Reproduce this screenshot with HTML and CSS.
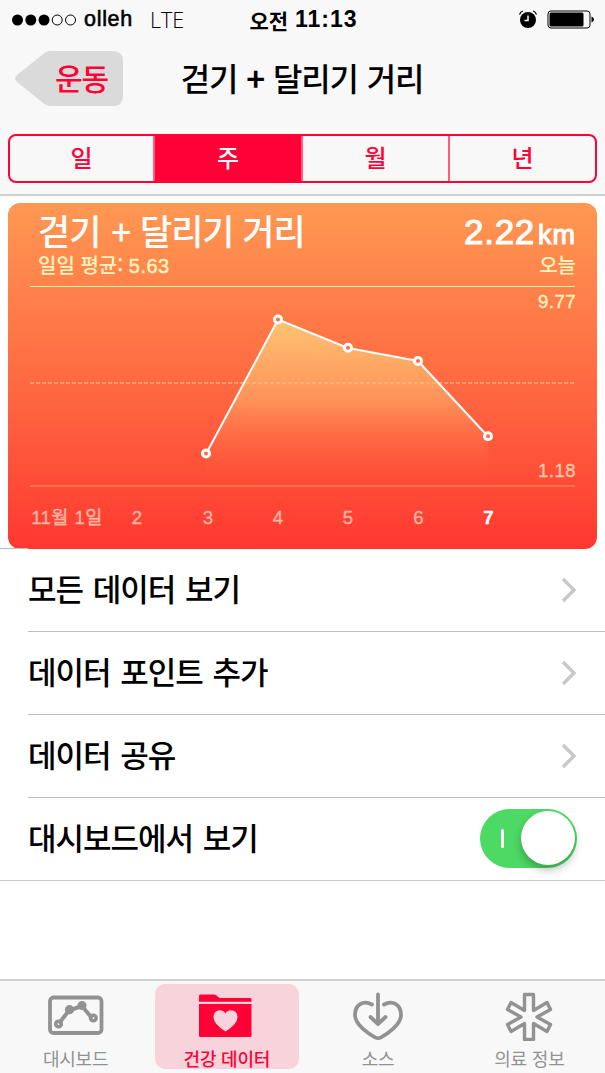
FILE: index.html
```
<!DOCTYPE html>
<html lang="ko">
<head>
  <meta charset="utf-8" />
  <meta name="viewport" content="width=device-width, initial-scale=1.0" />
  <title>걷기 + 달리기 거리</title>
  <link rel="stylesheet" href="styles.css">
</head>
<body>
  <header>
    <div class="status-bar">
      <div class="status-left">
        <svg class="signal" width="66" height="12" viewBox="0 0 66 12">
          <circle cx="5.500" cy="6" r="5.500" />
          <circle cx="18.800" cy="6" r="5.500" />
          <circle cx="32" cy="6" r="5.500" />
          <circle class="empty" cx="45.200" cy="6" r="5" />
          <circle class="empty" cx="58.500" cy="6" r="5" />
        </svg>
        <span class="carrier">olleh</span>
        <span class="network">LTE</span>
      </div>
      <div class="clock"><span class="ampm">오전</span><span>11:13</span></div>
      <div class="status-right">
        <svg width="20" height="20" viewBox="0 0 20 20">
          <circle cx="10" cy="10" r="8" />
          <path d="M10 5.500V10.500H6.500" fill="none" stroke="#fff" stroke-width="1.500" />
          <path d="M1.500 4.500Q2.500 1.500 5 1M18.500 4.500Q17.500 1.500 15 1" fill="none" stroke="#000" stroke-width="1.200" />
        </svg>
        <svg width="48" height="20" viewBox="0 0 48 20">
          <rect x="1" y="1" width="42" height="17" rx="3" fill="none" stroke="#000" />
          <rect x="2.500" y="2.500" width="34" height="14" rx="1.500" />
          <path d="M44.500 6.500Q47 7.500 47 9.500Q47 11.500 44.500 12.500Z" />
        </svg>
      </div>
    </div>

    <nav class="nav-bar">
      <a class="back" href="#">
        <svg class="back-shape" width="108" height="55" viewBox="0 0 108 55">
          <path d="M36 0H98Q108 0 108 10V45Q108 55 98 55H36Q31 55 27 51L2 31Q-2 27.500 2 24L27 4Q31 0 36 0Z" />
        </svg>
        <span>운동</span>
      </a>
      <h1>걷기 <b>+</b> 달리기 거리</h1>
    </nav>

    <div class="segments">
      <button>일</button>
      <button class="selected">주</button>
      <button>월</button>
      <button>년</button>
    </div>
  </header>

  <main>
    <section class="card">
      <div class="card-top">
        <h2>걷기 <span class="plus">+</span> 달리기 거리</h2>
        <div class="value">2.22<span class="unit">km</span></div>
      </div>
      <div class="card-sub">
        <span>일일 평균: <span class="average">5.63</span></span>
        <span>오늘</span>
      </div>
      <svg class="chart" width="589" height="262" viewBox="8 286 589 262">
        <defs>
          <linearGradient id="area" x1="0" y1="0" x2="0" y2="1">
            <stop offset="0" stop-color="#ffd27c" stop-opacity="0.85" />
            <stop offset="0.5" stop-color="#ffb66c" stop-opacity="0.55" />
            <stop offset="1" stop-color="#ff6040" stop-opacity="0" />
          </linearGradient>
        </defs>
        <path class="line-top" d="M30 286.500H575" />
        <path fill="url(#area)" d="M206 454L278 319L348 348L418 361L488 437V482H206Z" />
        <path class="line-average" d="M30 383H574" />
        <path class="line-bottom" d="M30 486H575" />
        <path class="line-data" d="M206 454L278 319.500L348 348L418 361L488 436.500" />
        <g class="points">
          <circle cx="206" cy="453.500" r="3.500" />
          <circle cx="278" cy="319.500" r="3.500" />
          <circle cx="348" cy="347.800" r="3.500" />
          <circle cx="418" cy="361" r="3.500" />
          <circle cx="488" cy="436.300" r="3.500" />
        </g>
        <text class="scale" x="576" y="308">9.77</text>
        <text class="scale low" x="576" y="477">1.18</text>
        <g class="days">
          <text class="first-day" x="67" y="524">11월 1일</text>
          <text x="137" y="524">2</text>
          <text x="208" y="524">3</text>
          <text x="278" y="524">4</text>
          <text x="348" y="524">5</text>
          <text x="418.500" y="524">6</text>
          <text class="today" x="488.500" y="524">7</text>
        </g>
      </svg>
    </section>

    <ul class="menu">
      <li>
        <span>모든 데이터 보기</span>
        <svg class="chevron" width="16" height="26" viewBox="0 0 16 26"><path d="M2 2L13 13L2 24" /></svg>
      </li>
      <li>
        <span>데이터 포인트 추가</span>
        <svg class="chevron" width="16" height="26" viewBox="0 0 16 26"><path d="M2 2L13 13L2 24" /></svg>
      </li>
      <li>
        <span>데이터 공유</span>
        <svg class="chevron" width="16" height="26" viewBox="0 0 16 26"><path d="M2 2L13 13L2 24" /></svg>
      </li>
      <li>
        <span>대시보드에서 보기</span>
        <div class="toggle">
          <div class="toggle-mark"></div>
          <div class="toggle-knob"></div>
        </div>
      </li>
    </ul>
  </main>

  <footer>
    <a class="tab" href="#">
      <svg width="56" height="50" viewBox="0 0 56 50">
        <rect x="2" y="6.500" width="51.500" height="35.500" rx="3.500" stroke-width="3.800" />
        <path d="M12 31L21 19.500L34 15L43 26" stroke-width="4" />
        <circle cx="10.500" cy="33" r="2.800" stroke-width="3.600" />
        <circle cx="21.500" cy="18.700" r="2.800" stroke-width="3.600" />
        <circle cx="34" cy="14.500" r="2.800" stroke-width="3.600" />
        <circle cx="45.300" cy="27" r="2.800" stroke-width="3.600" />
      </svg>
      <span>대시보드</span>
    </a>
    <a class="tab active" href="#">
      <svg width="56" height="50" viewBox="0 0 56 50">
        <path class="solid" d="M0 10.800V5Q0 3.500 1.500 3.500H15Q16.500 3.500 17.500 4.500L20.500 7H51Q52.500 7 52.500 8V10.800Z" />
        <path class="solid" d="M0 13H52.500V44.500Q52.500 46 51 46H1.500Q0 46 0 44.500Z" />
        <path class="heart" d="M26.500 40.500Q14.500 33 14.500 26C14.500 18.500 23.500 17 26.500 22.500C29.500 17 38.500 18.500 38.500 26Q38.500 33 26.500 40.500Z" />
      </svg>
      <span>건강 데이터</span>
    </a>
    <a class="tab" href="#">
      <svg width="54" height="50" viewBox="0 0 54 50">
        <path d="M21 13.500C12 8.500 4 14 4 24C4 34 18 43 24 46.300Q27 48 30 46.300C36 43 50 34 50 24C50 14 42 8.500 33 13.500" stroke-width="3.800" />
        <path d="M27 3.500V32M19.500 26L27 33L34.500 26" stroke-width="3.800" />
      </svg>
      <span>소스</span>
    </a>
    <a class="tab" href="#">
      <svg width="54" height="50" viewBox="0 0 54 50">
        <path d="M22.500 3.500H31.500V19.500L45 11.500L48.500 18.500L35 26L48.500 33.500L45 40.500L31.500 32.500V48.500H22.500V32.500L9 40.500L5.500 33.500L19 26L5.500 18.500L9 11.500L22.500 19.500Z" stroke-width="3.400" />
      </svg>
      <span>의료 정보</span>
    </a>
  </footer>
</body>
</html>
```

FILE: styles.css
```
html, body {
  height: 100%;
  margin: 0;
}

body {
  display: flex;
  flex-direction: column;
  font-family: "Liberation Sans", "Noto Sans CJK KR", sans-serif;
  font-weight: 500;
  color: #000;
  background: #fff;
}

a {
  color: inherit;
  text-decoration: none;
}

header {
  height: 194px;
  background: #f8f8f8;
  border-bottom: 2px solid #d0cfd0;
  flex-shrink: 0;
}

.status-bar {
  height: 39px;
  display: grid;
  grid-template-columns: 1fr auto 1fr;
  align-items: center;
  padding: 0 10px 0 12px;
}

.status-left {
  display: flex;
  align-items: center;
}

.signal .empty {
  fill: none;
  stroke: #000;
}

.carrier {
  margin-left: 6px;
  font: 21.5px "Liberation Sans", sans-serif;
  letter-spacing: 0.7px;
  -webkit-text-stroke: 0.6px #000;
}

.network {
  margin-left: 17px;
  font: 300 21.5px "Open Sans", sans-serif;
}

.clock {
  display: flex;
  align-items: center;
  gap: 7px;
  font-size: 23px;
  font-weight: bold;
  letter-spacing: 1px;
}

.ampm {
  font: bold 21px/30px "Noto Sans CJK KR", sans-serif;
  letter-spacing: 0;
}

.status-right {
  display: flex;
  justify-content: flex-end;
  align-items: center;
  gap: 9px;
}

.nav-bar {
  height: 78px;
  display: grid;
  grid-template-columns: 108px 1fr 108px;
  align-items: center;
  padding: 0 15px;
}

.back {
  display: grid;
  color: #ff0037;
  font: 500 30px/53px "Noto Sans CJK KR", sans-serif;
}

.back-shape,
.back span {
  grid-area: 1 / 1;
}

.back-shape {
  fill: #dadada;
}

.back span {
  padding-left: 40px;
  letter-spacing: -1px;
}

h1 {
  margin: 0;
  padding: 0 1px 2px 0;
  text-align: center;
  white-space: nowrap;
  font: 500 32px/50px "Noto Sans CJK KR", sans-serif;
  letter-spacing: -1.2px;
  word-spacing: 1.3px;
}

.segments {
  display: grid;
  grid-template-columns: 143px 148px 147px 1fr;
  height: 49px;
  box-sizing: border-box;
  margin: 17px 8px 0;
  border: 2px solid #ff0037;
  border-radius: 8px;
  overflow: hidden;
}

.segments button {
  padding: 0 0 4px;
  border: 0;
  border-left: 2px solid #ff5c80;
  background: none;
  color: #ff0037;
  font: 500 24px/41px "Noto Sans CJK KR", sans-serif;
}

.segments button:first-child {
  border-left: 0;
}

.segments .selected {
  background: #ff0037;
  color: #fff;
}

main {
  flex: 1;
}

.card {
  height: 346px;
  margin: 7px 8px 0;
  border-radius: 12px;
  background: linear-gradient(#ff9852, #ff6540 57%, #ff3830);
  color: #fff;
}

.card-top,
.card-sub {
  display: flex;
  justify-content: space-between;
  padding: 0 21px 0 30px;
}

.card-top {
  height: 49px;
}

h2 {
  margin: 0;
  font: 500 35px/53px "Noto Sans CJK KR", sans-serif;
  letter-spacing: -1px;
}

.plus {
  margin: 0 1px 0 2px;
}

.value {
  font: 35px/58px "Liberation Sans", sans-serif;
  letter-spacing: 0.7px;
  -webkit-text-stroke: 1.1px #fff;
}

.unit {
  margin-left: 3px;
  font-size: 27px;
  letter-spacing: 1px;
}

.card-sub {
  height: 34px;
  line-height: 25px;
  font-family: "Noto Sans CJK KR", sans-serif;
  font-size: 20px;
  color: #fff3bd;
}

.average {
  font-family: "Liberation Sans", sans-serif;
  font-size: 20px;
  letter-spacing: 0.5px;
  -webkit-text-stroke: 0.5px #fff3bd;
}

.chart {
  display: block;
}

.line-top {
  stroke: #ffef9c;
}

.line-average {
  stroke: #ffc080;
  stroke-width: 1.5;
  stroke-dasharray: 4 2;
  opacity: 0.8;
}

.line-bottom {
  stroke: #ff704d;
  stroke-width: 2;
}

.line-data {
  fill: none;
  stroke: #fff;
  stroke-width: 2;
}

.points {
  fill: #ff6b42;
  stroke: #fff;
  stroke-width: 3;
}

.scale {
  fill: #fff3bd;
  stroke: #fff3bd;
  stroke-width: 0.4;
  font: 18.5px "Liberation Sans", sans-serif;
  letter-spacing: 0.5px;
  text-anchor: end;
}

.low {
  fill: #ffc6a8;
  stroke: #ffc6a8;
}

.days {
  fill: #ffb5a0;
  stroke: #ffb5a0;
  stroke-width: 0.4;
  font: 18.5px "Liberation Sans", "Noto Sans CJK KR", sans-serif;
  text-anchor: middle;
}

.first-day {
  letter-spacing: 0.5px;
}

.days .today {
  fill: #fff;
  stroke: #fff;
  font-weight: bold;
}

/* the short line left of the card continues the row separators */
.menu {
  list-style: none;
  margin: -1px 0 0;
  padding: 1px 0 0 28px;
  background: linear-gradient(#bcbcc0, #bcbcc0) no-repeat 0 0 / 28px 1px;
  border-bottom: 1px solid #c8c7cc;
}

.menu li {
  height: 83px;
  box-sizing: border-box;
  display: flex;
  align-items: center;
  justify-content: space-between;
  padding-right: 28px;
  border-bottom: 1px solid #bcbcc0;
  font: 500 31px/50px "Noto Sans CJK KR", sans-serif;
  letter-spacing: -1px;
  word-spacing: 2px;
}

.menu li span {
  padding-bottom: 4px;
}

.menu li:last-child {
  height: 82px;
  border-bottom: 0;
}

.chevron {
  fill: none;
  stroke: #c7c7cc;
  stroke-width: 3.4;
}

.toggle {
  width: 97px;
  height: 59px;
  box-sizing: border-box;
  margin-bottom: 2px;
  padding: 0 2px 0 21px;
  display: flex;
  align-items: center;
  justify-content: space-between;
  border-radius: 30px;
  background: #4cd964;
}

.toggle-mark {
  width: 3px;
  height: 19px;
  border-radius: 2px;
  background: #fff;
}

.toggle-knob {
  width: 54px;
  height: 54px;
  border-radius: 50%;
  background: #fff;
  box-shadow: 0 5px 9px rgba(0, 0, 0, 0.25);
}

footer {
  height: 92px;
  display: grid;
  grid-template-columns: repeat(4, 1fr);
  justify-items: center;
  border-top: 2px solid #d0d0d0;
  background: #f8f8f8;
  flex-shrink: 0;
}

.tab {
  width: 144px;
  height: 85px;
  margin-top: 3px;
  padding-top: 7px;
  box-sizing: border-box;
  display: flex;
  flex-direction: column;
  align-items: center;
  border-radius: 10px;
  color: #929292;
  font: 400 18px/34px "Noto Sans CJK KR", sans-serif;
  letter-spacing: -0.2px;
  white-space: nowrap;
}

.tab svg {
  flex-shrink: 0;
  fill: none;
  stroke: currentColor;
  stroke-linecap: round;
  stroke-linejoin: round;
}

.tab.active {
  color: #ff0037;
  background: #f9d3db;
  font-weight: 500;
}

.tab .solid {
  fill: currentColor;
  stroke: none;
}

.tab .heart {
  fill: #f9d3db;
  stroke: none;
}
```
